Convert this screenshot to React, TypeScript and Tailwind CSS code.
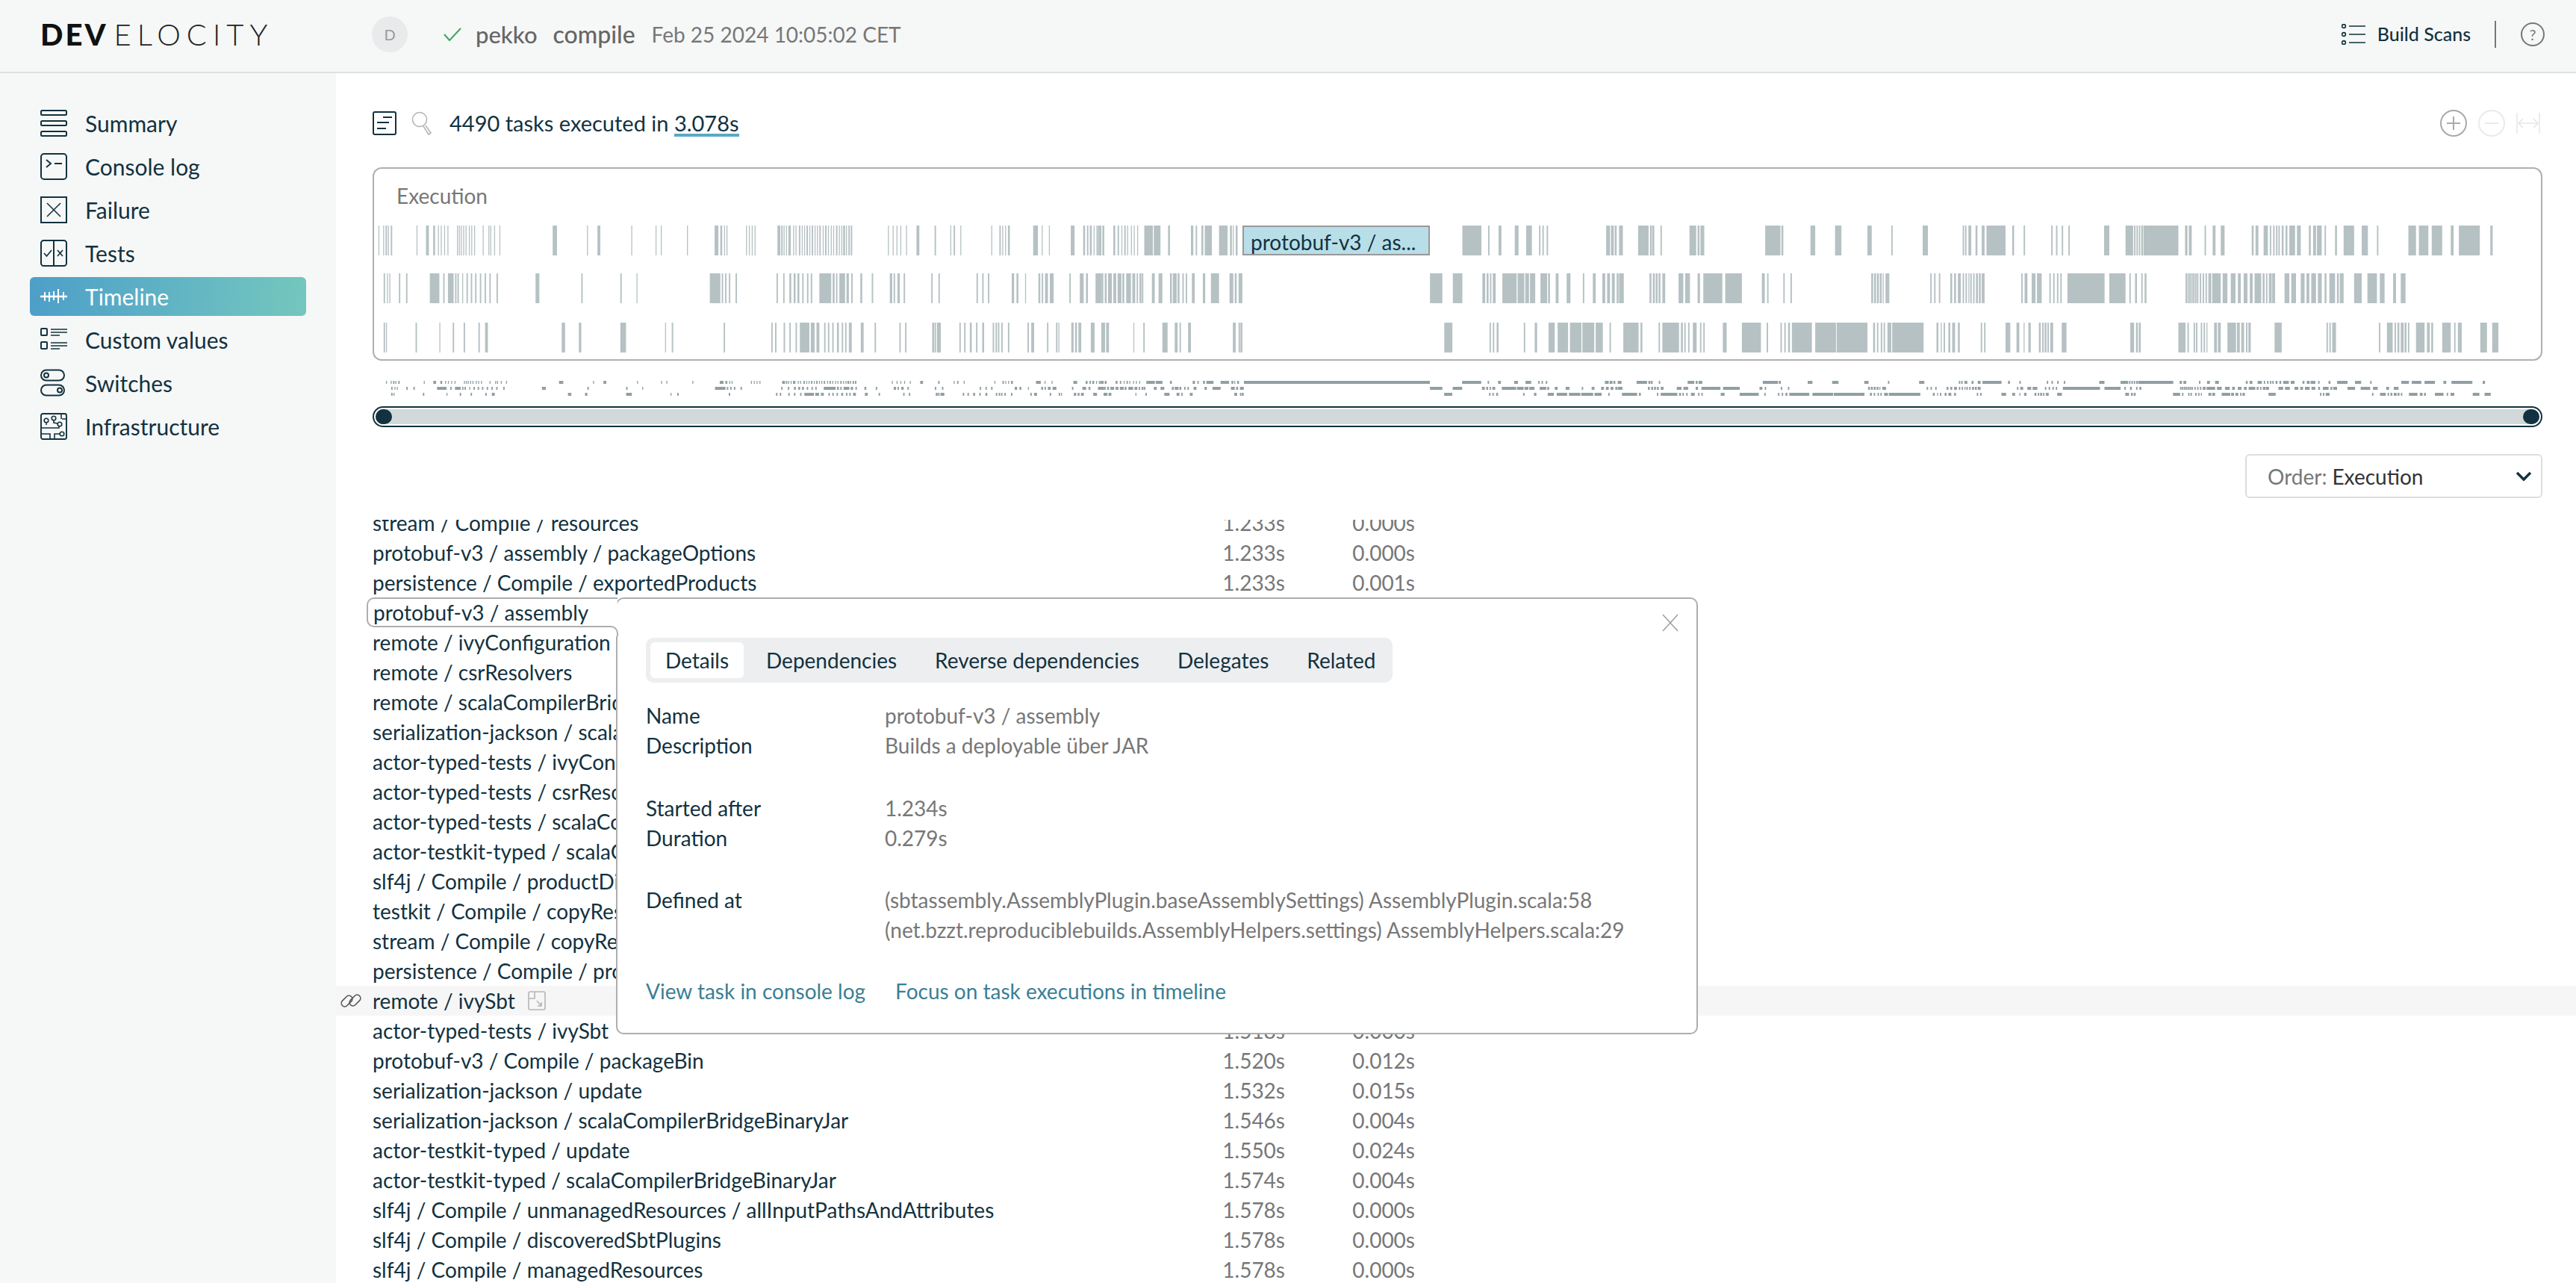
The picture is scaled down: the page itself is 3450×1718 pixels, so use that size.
import React from "react";

const Z = 1.568;
type Seg = [number, number[]];
const R1: Seg[] = [
  [480, [42,1,52,1,57,3,62,2,68,3,122,2,142,6,157,4,167,2,173,2,180,2,187,2,207,2,211,2,215,2,220,2,225,2,232,2,237,2,243,2,261,2,273,1,277,2,285,2,296,2,408,9,480,2,502,6,573,2,624,2,635,2,690,2,748,8,760,4,768,2,773,2,814,2,820,2,826,2,832,2,880,6,888,3,893,2,898,2,903,5,913,2,918,2,925,3,931,2,936,2,941,3,947,2,952,3,958,2,963,2,968,3,975,2,980,3,986,2,992,2,997,2,1003,3,1009,2,1014,2,1018,4,1024,2,1029,3,1034,3,1112,2,1122,2,1130,2,1138,2,1150,2,1172,6,1210,3,1243,2,1250,3,1264,2,1329,2,1346,3,1352,2,1358,2,1364,4,1417,10,1435,2,1450,2,1496,8,1522,4,1530,3,1536,4,1544,2,1550,3,1556,4]],
  [1470, [1,3,5,2,10,4,33,4,42,3,50,2,56,3,62,2,70,2,76,2,83,2,98,18,118,14,148,4,196,5,206,3,218,4,225,15,255,18,278,4,284,2,290,4,766,40,820,3,842,6,876,8,900,12,927,3,934,3,943,3,1068,8,1078,6,1086,4,1095,8,1135,22,1160,4,1165,4,1182,3,1243,14,1260,4,1266,8,1402,32,1436,4,1497,10,1550,12]],
  [2450, [12,11,80,9,130,3,196,11,280,3,285,3,292,6,307,4,320,6,330,40,384,4,408,3,466,3,476,3,488,3,502,3,577,11,622,16,640,3,645,3,650,3,655,4,660,73,747,5,755,6,788,3,805,6,822,8,887,4,895,6,912,9,925,3,932,3,938,3,943,3,950,4,958,4,966,12,982,8,1007,4,1016,6,1024,10,1040,3,1062,4,1080,22,1118,13,1150,3,1216,16,1238,20,1265,22,1305,6,1322,44,1388,5]],
];
const R2: Seg[] = [
  [480, [53,3,60,2,65,2,85,3,100,3,150,20,178,3,188,12,203,3,208,3,218,2,227,3,236,3,245,3,255,3,265,3,275,3,290,3,372,8,468,3,550,3,584,2,738,22,763,3,770,3,778,3,792,3,878,3,892,3,905,4,914,4,922,4,932,3,942,3,950,3,968,25,996,4,1003,3,1010,12,1025,5,1035,3,1054,4,1078,3,1116,5,1124,3,1132,5,1145,3,1203,3,1218,3,1298,3,1310,3,1322,3,1372,5,1382,4,1400,2,1428,4,1435,3,1442,6,1452,8,1493,3,1515,8,1528,4,1548,12]],
  [1470, [0,5,8,4,15,4,22,8,33,6,42,8,52,4,60,10,73,6,82,3,88,4,93,3,114,6,128,8,152,4,158,8,168,4,178,3,185,3,198,6,221,5,238,17,277,8,288,4,296,8,698,26,746,20,808,6,817,4,824,3,830,6,850,30,882,14,898,8,908,11,930,14,946,4,962,6,985,8,1019,3,1040,6,1060,6,1070,6,1080,6,1090,4,1095,10,1159,4,1166,4,1172,4,1178,4,1186,6,1220,10,1234,10,1260,5,1272,40,1318,35,1395,6,1406,3,1440,3,1455,3]],
  [2450, [88,4,94,4,100,4,106,4,112,2,118,8,212,3,220,3,230,3,254,4,262,4,270,6,280,3,286,3,292,2,296,3,302,3,308,4,314,4,320,6,403,3,410,6,425,8,436,10,462,3,470,3,478,3,485,3,500,78,588,34,630,3,642,4,655,3,662,4,748,3,752,3,756,3,760,3,764,3,768,3,772,3,778,3,784,3,790,3,796,6,804,18,826,10,843,10,858,6,870,8,883,6,893,14,910,4,917,3,923,6,930,6,956,10,970,10,990,8,1002,6,1012,10,1026,8,1040,4,1050,12,1066,4,1072,8,1102,16,1130,20,1156,10,1184,6,1200,10]],
];
const R3: Seg[] = [
  [480, [53,3,58,2,120,3,170,2,198,3,221,3,252,3,266,6,427,7,463,5,550,12,644,2,658,3,767,3,867,3,875,3,893,3,905,3,918,3,927,20,950,8,962,6,978,3,986,3,995,3,1005,4,1015,3,1022,3,1030,6,1055,6,1084,3,1136,3,1148,3,1205,4,1210,3,1215,8,1262,3,1272,3,1284,4,1297,3,1310,4,1332,3,1338,3,1343,3,1350,3,1364,3,1405,3,1413,6,1446,3,1465,3,1470,2,1497,5,1505,4,1512,6,1538,8,1560,8]],
  [1470, [8,6,18,6,75,2,96,3,136,11,162,6,172,3,190,6,284,6,296,3,300,4,728,17,823,3,830,3,838,4,895,3,918,5,947,13,966,22,992,24,1018,25,1046,15,1075,3,1104,32,1140,4,1178,3,1186,35,1225,4,1232,3,1240,3,1250,8,1265,3,1272,3,1313,8,1353,40,1405,3,1434,3,1442,3,1450,4,1458,42,1507,40,1552,16]],
  [2450, [0,14,22,58,92,4,100,3,108,3,114,3,122,8,132,66,225,4,234,2,240,3,250,4,258,6,270,4,318,3,325,3,370,10,393,6,408,2,418,5,440,4,447,3,452,4,458,3,464,6,488,10,632,8,644,4,650,4,733,15,752,3,765,3,770,3,780,3,786,3,792,2,808,6,816,6,836,18,856,6,865,6,875,3,880,5,935,15,1044,3,1050,3,1056,8,1154,3,1171,12,1187,3,1193,4,1200,6,1208,4,1215,3,1232,18,1255,6,1264,4,1287,18,1312,3,1320,8,1367,14,1392,13]],
];

function expand(segs: Seg[]) {
  const out: { x: number; w: number }[] = [];
  for (const [base, a] of segs) {
    for (let i = 0; i < a.length; i += 2) out.push({ x: base + a[i] / Z, w: Math.max(a[i + 1] / Z, 1.3) });
  }
  return out;
}
const ROWS = [R1, R2, R3].map(expand);
const miniX = (x: number) => x + (1915 - x) * 0.0072;

function Chart() {
  return (
    <svg width="2902" height="170" viewBox="501 302 2902 170" className="block">
      {ROWS.map((row, i) =>
        row.map((b, j) => <rect key={i + "-" + j} x={b.x} y={302 + [0, 64, 130][i]} width={b.w} height={40} fill="#b6c1c3" />)
      )}
    </svg>
  );
}
function MiniMap() {
  return (
    <svg width="2906" height="20" viewBox="499 510 2906 20" className="block">
      {ROWS.map((row, i) =>
        row.map((b, j) => <rect key={i + "-" + j} x={miniX(b.x)} y={510 + i * 8} width={b.w} height={4} fill="#8f9fa3" />)
      )}
      <rect x={1666} y={510} width={249} height={4} fill="#8f9fa3" />
    </svg>
  );
}

const D = "#12323f";
const ic = { fill: "none", stroke: D, strokeWidth: 2 };
const NavIcons: Record<string, React.ReactNode> = {
  Summary: (
    <g {...ic}>
      <rect x="1" y="1" width="34" height="6" rx="1.5" /><rect x="1" y="15" width="34" height="6" rx="1.5" /><rect x="1" y="29" width="34" height="6" rx="1.5" />
    </g>
  ),
  "Console log": (
    <g {...ic}>
      <rect x="1" y="1" width="34" height="34" rx="4" /><path d="M8 9l6 5-6 5M19 14h10" />
    </g>
  ),
  Failure: (
    <g {...ic}>
      <rect x="1" y="1" width="34" height="34" /><path d="M9 9l18 18M27 9L9 27" strokeWidth="1.6" />
    </g>
  ),
  Tests: (
    <g {...ic}>
      <rect x="1" y="1" width="34" height="34" rx="3.5" /><path d="M18 1v34" /><path d="M5 18l3.5 4L15 14M23 14l7 8M30 14l-7 8" strokeWidth="1.7" />
    </g>
  ),
  Timeline: (
    <g fill="none" stroke="#fff" strokeWidth="2">
      <path d="M0 18h36" strokeWidth="2.6" /><path d="M6 12v12M12 12v13M18 11v12M24 8v19M31 12v11" />
    </g>
  ),
  "Custom values": (
    <g {...ic}>
      <rect x="1" y="3" width="8" height="9" rx="1" /><rect x="1" y="21" width="8" height="9" rx="1" />
      <path d="M14 4h22M14 8h22M14 12h12M14 22h22M14 26h22M14 30h12" strokeWidth="1.7" />
    </g>
  ),
  Switches: (
    <g {...ic}>
      <rect x="1" y="0.5" width="31" height="14" rx="7" /><circle cx="8" cy="7.5" r="3" /><rect x="1" y="20.5" width="31" height="14" rx="7" /><circle cx="26" cy="27.5" r="3" />
    </g>
  ),
  Infrastructure: (
    <g {...ic} strokeWidth="1.9">
      <rect x="1" y="1" width="34" height="34" rx="2.5" />
      <circle cx="8" cy="10" r="2.8" strokeWidth="1.6" /><circle cx="18" cy="7" r="2.8" strokeWidth="1.6" /><circle cx="26" cy="15" r="2.8" strokeWidth="1.6" /><circle cx="29" cy="28" r="2.8" strokeWidth="1.6" />
      <path d="M1 20h24v-2M8 13v3M18 10v3l5 1M35 8h-6M1 28h12v7M26 28h-7v7M28 1v7" strokeWidth="1.6" />
    </g>
  ),
};
const NAV = ["Summary", "Console log", "Failure", "Tests", "Timeline", "Custom values", "Switches", "Infrastructure"];

const LIST: [string, string, string][] = [
  ["stream / Compile / resources", "1.233s", "0.000s"],
  ["protobuf-v3 / assembly / packageOptions", "1.233s", "0.000s"],
  ["persistence / Compile / exportedProducts", "1.233s", "0.001s"],
  ["", "", ""],
  ["remote / ivyConfiguration", "", ""],
  ["remote / csrResolvers", "", ""],
  ["remote / scalaCompilerBridgeBinaryJar", "", ""],
  ["serialization-jackson / scalaCompilerBridgeBinaryJar", "", ""],
  ["actor-typed-tests / ivyConfiguration", "", ""],
  ["actor-typed-tests / csrResolvers", "", ""],
  ["actor-typed-tests / scalaCompilerBridgeBinaryJar", "", ""],
  ["actor-testkit-typed / scalaCompilerBridgeBinaryJar", "", ""],
  ["slf4j / Compile / productDirectories", "", ""],
  ["testkit / Compile / copyResources", "", ""],
  ["stream / Compile / copyResources", "", ""],
  ["persistence / Compile / products", "", ""],
  ["remote / ivySbt", "", ""],
  ["actor-typed-tests / ivySbt", "1.518s", "0.000s"],
  ["protobuf-v3 / Compile / packageBin", "1.520s", "0.012s"],
  ["serialization-jackson / update", "1.532s", "0.015s"],
  ["serialization-jackson / scalaCompilerBridgeBinaryJar", "1.546s", "0.004s"],
  ["actor-testkit-typed / update", "1.550s", "0.024s"],
  ["actor-testkit-typed / scalaCompilerBridgeBinaryJar", "1.574s", "0.004s"],
  ["slf4j / Compile / unmanagedResources / allInputPathsAndAttributes", "1.578s", "0.000s"],
  ["slf4j / Compile / discoveredSbtPlugins", "1.578s", "0.000s"],
  ["slf4j / Compile / managedResources", "1.578s", "0.000s"],
];

function Row({ r }: { r: [string, string, string] }) {
  const hover = r[0] === "remote / ivySbt";
  return (
    <div className={"relative flex h-[40px] items-center pl-[49px] text-[28px] leading-[40px] " + (hover ? "bg-[#f6f6f6]" : "")}>
      {hover && (
        <svg className="absolute left-[5px] top-[7px]" width="30" height="26" viewBox="0 0 30 26" fill="none" stroke="#555" strokeWidth="1.6">
          <rect x="1" y="9" width="17" height="9" rx="4.5" transform="rotate(-45 9.5 13.5)" />
          <rect x="12" y="8" width="17" height="9" rx="4.5" transform="rotate(-45 20.5 12.5)" />
        </svg>
      )}
      <div className="flex w-[1138px] items-center">
        <span className="whitespace-nowrap text-[#12323f]">{r[0]}</span>
        {hover && (
          <svg className="ml-[17px]" width="24" height="26" viewBox="0 0 24 26" fill="none" stroke="#b5b5b5" strokeWidth="1.6">
            <rect x="1" y="1" width="22" height="24" rx="2" /><path d="M1 10h8V1M12 13l6 7M18 15v5h-5" />
          </svg>
        )}
      </div>
      <span className="w-[84px] text-right text-[#777]">{r[1]}</span>
      <span className="w-[174px] text-right text-[#777]">{r[2]}</span>
    </div>
  );
}

function Popup() {
  const tabs = ["Dependencies", "Reverse dependencies", "Delegates", "Related"];
  return (
    <>
      <div className="absolute left-[375px] top-[104px] z-10 h-[585px] w-[1449px] rounded-[10px] border-2 border-[#aeaeae] bg-white pl-[38px] pr-[30px] pt-[52px] text-[28px] leading-[40px]">
        <svg className="absolute right-[23px] top-[20px]" width="24" height="24" viewBox="0 0 24 24" fill="none" stroke="#a0a0a0" strokeWidth="1.6">
          <path d="M2 1l20 22M22 1L2 23" />
        </svg>
        <div className="flex h-[60px] w-[1000px] items-center rounded-[10px] bg-[#edeef0] px-[6px]">
          <div className="flex h-[48px] w-[125px] shrink-0 items-center justify-center rounded-[6px] bg-white text-[#12323f]">Details</div>
          {tabs.map((t) => (
            <div key={t} className="ml-[9px] shrink-0 whitespace-nowrap px-[21px] text-[#12323f]">{t}</div>
          ))}
        </div>
        <div className="mt-[24px] grid grid-cols-[320px_1fr] text-[#777]">
          <div className="text-[#12323f]">Name</div><div>protobuf-v3 / assembly</div>
          <div className="text-[#12323f]">Description</div><div>Builds a deployable über JAR</div>
          <div className="mt-[44px] text-[#12323f]">Started after</div><div className="mt-[44px]">1.234s</div>
          <div className="text-[#12323f]">Duration</div><div>0.279s</div>
          <div className="mt-[43px] text-[#12323f]">Defined at</div><div className="mt-[43px]">(sbtassembly.AssemblyPlugin.baseAssemblySettings) AssemblyPlugin.scala:58</div>
          <div></div><div>(net.bzzt.reproduciblebuilds.AssemblyHelpers.settings) AssemblyHelpers.scala:29</div>
        </div>
        <div className="mt-[42px] flex gap-[40px] text-[#3a7f94]">
          <span>View task in console log</span>
          <span>Focus on task executions in timeline</span>
        </div>
      </div>
      <div className="absolute left-[41px] top-[104px] z-20 flex h-[40px] w-[336px] items-center rounded-l-[10px] border-y-2 border-l-2 border-[#aeaeae] bg-white pl-[7px] text-[28px] text-[#12323f]">
        protobuf-v3 / assembly
      </div>
    </>
  );
}

export default function App() {
  return (
    <div className="flex h-[1718px] w-[3450px] flex-col overflow-hidden bg-white font-['Lato',sans-serif] text-[#12323f]">
      <header className="flex h-[98px] shrink-0 items-center border-b-2 border-[#e0e0e0] bg-[#f6f7f7] pb-[4px] pl-[54px] pr-[42px]">
        <div className="flex w-[444px] items-center text-[40px] leading-none text-[#111]">
          <span className="font-black tracking-[3px]">DEV</span>
          <span className="ml-[8px] font-light tracking-[8px] text-[#222]">ELOCITY</span>
        </div>
        <div className="flex h-[48px] w-[48px] items-center justify-center rounded-full bg-[#e9eaeb] text-[20px] text-[#999]">D</div>
        <svg className="ml-[48px]" width="24" height="18" viewBox="0 0 24 18" fill="none" stroke="#3fa35f" strokeWidth="2"><path d="M1 9l7 8L23 1" /></svg>
        <span className="ml-[19px] text-[31px] font-medium text-[#666]">pekko</span>
        <span className="ml-[21px] text-[32px] font-medium text-[#666]">compile</span>
        <span className="ml-[22px] text-[28px] text-[#777]">Feb 25 2024 10:05:02 CET</span>
        <div className="ml-auto flex items-center">
          <svg width="32" height="28" viewBox="0 0 32 28" fill="none" stroke={D} strokeWidth="1.6">
            <circle cx="3" cy="3" r="2.4" /><circle cx="3" cy="14" r="2.4" /><circle cx="3" cy="25" r="2.4" />
            <path d="M10 3h22M10 14h22M10 25h22" />
          </svg>
          <span className="ml-[16px] text-[25px] font-medium">Build Scans</span>
          <div className="ml-[32px] h-[36px] w-[2px] bg-[#777]"></div>
          <div className="ml-[33px] flex h-[32px] w-[32px] items-center justify-center rounded-full border-2 border-[#777] text-[20px] text-[#777]">?</div>
        </div>
      </header>
      <div className="flex min-h-0 flex-1">
        <aside className="w-[450px] shrink-0 bg-[#f6f7f7] px-[40px] pt-[41px]">
          <nav className="flex flex-col gap-[6px]">
            {NAV.map((n) => {
              const on = n === "Timeline";
              return (
                <div key={n} className={"flex h-[52px] items-center gap-[24px] rounded-[6px] px-[14px] text-[30px] " + (on ? "bg-gradient-to-r from-[#4d9fc9] to-[#74c7bd] text-white" : "text-[#12323f]")}>
                  <svg width="36" height="36" viewBox="0 0 36 36" className="shrink-0 overflow-visible">{NavIcons[n]}</svg>
                  <span>{n}</span>
                </div>
              );
            })}
          </nav>
        </aside>
        <main className="flex min-w-0 flex-1 flex-col">
          <div className="shrink-0 pl-[49px] pr-[45px] pt-[49px]">
            <div className="flex h-[36px] items-center">
              <svg width="32" height="32" viewBox="0 0 32 32" fill="none" stroke={D} strokeWidth="2">
                <rect x="1" y="1" width="30" height="30" rx="2" /><path d="M14 8h12M6 15h16M6 23h12" />
              </svg>
              <svg className="ml-[20px]" width="28" height="32" viewBox="0 0 28 32" fill="none" stroke="#b5b5b5" strokeWidth="1.6">
                <circle cx="11" cy="11" r="9.5" /><path d="M16 20l7 11 3-2-7-10" />
              </svg>
              <span className="ml-[23px] text-[29px] leading-[36px]">4490 tasks executed in <span className="inline-block border-b-[4px] border-[#5aa9c4] leading-[28px]">3.078s</span></span>
              <div className="ml-auto flex items-center gap-[15px]">
                <svg width="36" height="36" viewBox="0 0 36 36" fill="none" stroke="#aaa" strokeWidth="2"><circle cx="18" cy="18" r="17" /><path d="M18 9v18M9 18h18" /></svg>
                <svg width="36" height="36" viewBox="0 0 36 36" fill="none" stroke="#eaeaea" strokeWidth="2"><circle cx="18" cy="18" r="17" /><path d="M9 18h18" /></svg>
                <svg className="mr-[3px]" width="32" height="28" viewBox="0 0 32 28" fill="none" stroke="#e6e6e6" strokeWidth="2"><path d="M1 0v28M31 0v28M3 14h26M9 8l-6 6 6 6M23 8l6 6-6 6" strokeWidth="1.5" /></svg>
              </div>
            </div>
            <div className="relative mt-[41px] h-[259px] rounded-[12px] border-2 border-[#b0b0b0]">
              <div className="pl-[30px] pt-[18px] text-[28px] leading-[36px] text-[#777]">Execution</div>
              <div className="mt-[22px]"><Chart /></div>
              <div className="absolute left-[1163px] top-[76px] h-[40px] w-[251px] overflow-hidden border-2 border-[#999] bg-[#b8dee8] pl-[9px] pt-[3px] text-[28px] leading-[34px] text-[#12323f]">protobuf-v3 / as...</div>
            </div>
            <div className="mt-[27px]"><MiniMap /></div>
            <div className="mt-[14px] h-[28px] rounded-full border-2 border-[#12323f] bg-white p-[2px]">
              <div className="flex h-[20px] items-center justify-between rounded-full bg-[#d1d9da]">
                <div className="h-[20px] w-[22px] rounded-full bg-[#12323f]"></div>
                <div className="h-[20px] w-[22px] rounded-full bg-[#12323f]"></div>
              </div>
            </div>
            <div className="mt-[36px] flex justify-end">
              <div className="flex h-[59px] w-[398px] items-center rounded-[6px] border-2 border-[#ddd] pl-[28px] pr-[12px] text-[28px]">
                <span className="text-[#777]">Order:</span>
                <span className="ml-[7px] text-[#333]">Execution</span>
                <svg className="ml-auto" width="22" height="14" viewBox="0 0 22 14" fill="none" stroke={D} strokeWidth="3.4"><path d="M2 2l9 9 9-9" /></svg>
              </div>
            </div>
          </div>
          <div className="relative mt-[29px] min-h-0 flex-1 overflow-hidden">
            <div className="-mt-[16px]">
              {LIST.map((r, i) => <Row key={i} r={r} />)}
            </div>
            <Popup />
            <svg className="absolute left-[365px] top-[142px] z-30" width="14" height="14" viewBox="0 0 14 14" fill="none">
              <rect width="14" height="14" fill="#fff" />
              <path d="M0 1h3a9 9 0 0 1 9 9v4" stroke="#aeaeae" strokeWidth="2" />
            </svg>
          </div>
        </main>
      </div>
    </div>
  );
}
